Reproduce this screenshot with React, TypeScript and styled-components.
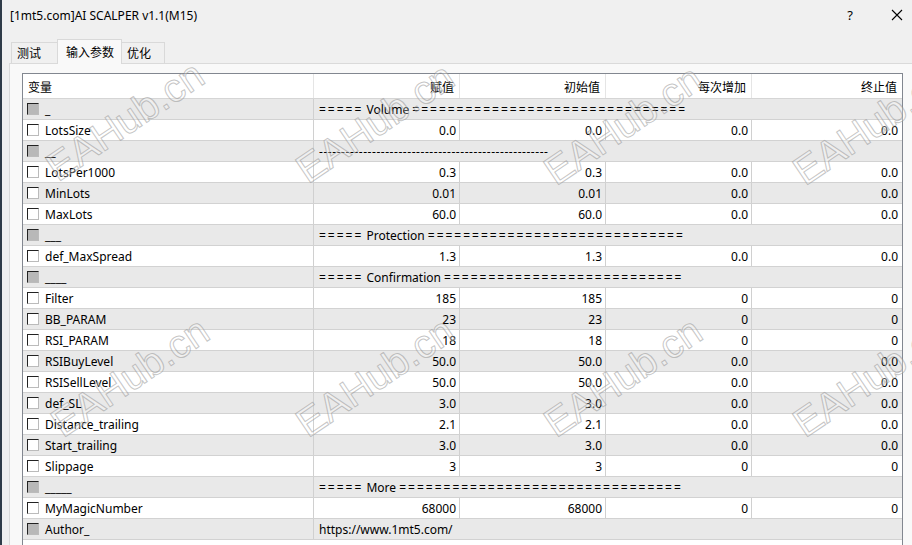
import React from 'react';
import styled, { createGlobalStyle } from 'styled-components';

const GlobalStyle = createGlobalStyle`
  html, body {
    margin: 0;
    padding: 0;
    background: #f0f0f0;
  }
  body {
    font-family: "Noto Sans", "Noto Sans CJK SC", sans-serif;
    font-size: 12px;
    color: #000;
  }
`;

const Window = styled.div`
  position: relative;
  width: 912px;
  height: 545px;
  overflow: hidden;
  display: flex;
  flex-direction: column;
  background: #f0f0f0;
  box-sizing: border-box;
  border-left: 2px solid #2f3b48;
`;

const TitleBar = styled.div`
  height: 30px;
  flex: 0 0 30px;
  display: flex;
  align-items: center;
  padding-left: 8px;
  font-size: 12px;
  background: #f0f0f0;
`;

const Title = styled.span`
  flex: 1;
  white-space: nowrap;
`;

const TitleButton = styled.div<{ $gap?: number }>`
  width: 30px;
  height: 30px;
  margin-right: ${({ $gap }) => $gap ?? 0}px;
  display: flex;
  align-items: center;
  justify-content: center;
  font-size: 13px;
`;

const TabStrip = styled.div`
  height: 33px;
  flex: 0 0 33px;
  display: flex;
  align-items: flex-end;
  padding-left: 9px;
  font-family: "Noto Sans CJK SC", sans-serif;
`;

const Tab = styled.div<{ $active?: boolean; $w: number }>`
  box-sizing: border-box;
  width: ${({ $w }) => $w}px;
  height: ${({ $active }) => ($active ? '25px' : '21px')};
  padding-left: ${({ $active }) => ($active ? '8px' : '5px')};
  display: flex;
  align-items: center;
  border: 1px solid #d9d9d9;
  border-bottom: none;
  background: ${({ $active }) => ($active ? '#f9f9f9' : '#f0f0f0')};
  margin-bottom: ${({ $active }) => ($active ? '-1px' : '0')};
  z-index: ${({ $active }) => ($active ? 1 : 0)};
  margin-left: ${({ $active }) => ($active ? '-1px' : '0')};
  margin-right: ${({ $active }) => ($active ? '-1px' : '0')};
  font-size: 12px;
  line-height: 1;
`;

const Panel = styled.div`
  flex: 1;
  margin-left: 7px;
  padding: 9px 0 0 12px;
  background: #f9f9f9;
  border-top: 1px solid #dadada;
  border-left: 1px solid #dadada;
`;

const Table = styled.div`
  width: 881px;
  box-sizing: border-box;
  border: 1px solid #828790;
  border-bottom: none;
  background: #fff;
  height: 480px;
`;

const GridRow = styled.div<{ $shade?: boolean; $header?: boolean }>`
  display: grid;
  grid-template-columns: 291px 146px 146px 146px 150px;
  height: ${({ $header }) => ($header ? '24px' : '20px')};
  border-bottom: 1px solid ${({ $header }) => ($header ? '#d5d5d5' : '#d2d2d2')};
  background: ${({ $shade }) => ($shade ? '#e9e9e9' : '#fff')};
`;

const HeadCell = styled.div<{ $right?: boolean; $last?: boolean }>`
  display: flex;
  align-items: center;
  justify-content: ${({ $right }) => ($right ? 'flex-end' : 'flex-start')};
  padding: ${({ $right }) => ($right ? '0 5px 0 0' : '0 0 0 5px')};
  border-right: ${({ $last }) => ($last ? 'none' : '1px solid #e5e5e5')};
  font-family: "Noto Sans CJK SC", sans-serif;
  font-size: 12px;
  white-space: nowrap;
`;

const NameCell = styled.div`
  display: flex;
  align-items: center;
  padding-left: 4px;
  border-right: 1px solid #d0d0d0;
  white-space: nowrap;
`;

const ValueCell = styled.div<{ $last?: boolean }>`
  display: flex;
  align-items: center;
  justify-content: flex-end;
  padding-right: ${({ $last }) => ($last ? '4px' : '3px')};
  border-right: ${({ $last }) => ($last ? 'none' : '1px solid #d0d0d0')};
  white-space: nowrap;
`;

const SpanCell = styled.div`
  grid-column: span 4;
  display: flex;
  align-items: center;
  padding-left: 5px;
  white-space: pre;
  overflow: hidden;
`;

const Rule = styled.span<{ $spacing: number }>`
  letter-spacing: ${({ $spacing }) => $spacing}px;
`;

const Check = styled.span<{ $grey?: boolean }>`
  box-sizing: border-box;
  width: 12px;
  height: 12px;
  margin-right: 6px;
  flex: 0 0 12px;
  border-top: 1px solid #222;
  border-left: 1px solid #222;
  border-right: 1px solid #bbb;
  border-bottom: 1px solid #bbb;
  background: ${({ $grey }) => ($grey ? '#b8b8b8' : '#fff')};
`;

const Watermark = styled.div`
  position: absolute;
  font-family: "Liberation Sans", Arial, sans-serif;
  font-size: 40px;
  color: rgba(255, 255, 255, 0.3);
  -webkit-text-stroke: 1px rgba(140, 140, 140, 0.5);
  white-space: nowrap;
  transform: translate(-50%, -50%) rotate(-34deg);
  pointer-events: none;
  z-index: 5;
`;

type Row = {
  name: string;
  values?: string[];
  text?: string;
};

const eq = (n: number) => '='.repeat(n);

const rows: Row[] = [
  { name: '_', text: `===== Volume ${eq(31)}` },
  { name: 'LotsSize', values: ['0.0', '0.0', '0.0', '0.0'] },
  { name: '__', text: '-'.repeat(52) },
  { name: 'LotsPer1000', values: ['0.3', '0.3', '0.0', '0.0'] },
  { name: 'MinLots', values: ['0.01', '0.01', '0.0', '0.0'] },
  { name: 'MaxLots', values: ['60.0', '60.0', '0.0', '0.0'] },
  { name: '___', text: `===== Protection ${eq(29)}` },
  { name: 'def_MaxSpread', values: ['1.3', '1.3', '0.0', '0.0'] },
  { name: '____', text: `===== Confirmation ${eq(27)}` },
  { name: 'Filter', values: ['185', '185', '0', '0'] },
  { name: 'BB_PARAM', values: ['23', '23', '0', '0'] },
  { name: 'RSI_PARAM', values: ['18', '18', '0', '0'] },
  { name: 'RSIBuyLevel', values: ['50.0', '50.0', '0.0', '0.0'] },
  { name: 'RSISellLevel', values: ['50.0', '50.0', '0.0', '0.0'] },
  { name: 'def_SL', values: ['3.0', '3.0', '0.0', '0.0'] },
  { name: 'Distance_trailing', values: ['2.1', '2.1', '0.0', '0.0'] },
  { name: 'Start_trailing', values: ['3.0', '3.0', '0.0', '0.0'] },
  { name: 'Slippage', values: ['3', '3', '0', '0'] },
  { name: '_____', text: `===== More ${eq(32)}` },
  { name: 'MyMagicNumber', values: ['68000', '68000', '0', '0'] },
  { name: 'Author_', text: 'https://www.1mt5.com/' },
];

// '=' and '-' runs are spaced out to the width the original font gives them
const renderText = (text: string) =>
  text.split(/(=+|-+)/).map((part, i) => {
    if (/^=+$/.test(part)) return <Rule key={i} $spacing={2}>{part}</Rule>;
    if (/^-+$/.test(part)) return <Rule key={i} $spacing={0.55}>{part}</Rule>;
    return <React.Fragment key={i}>{part}</React.Fragment>;
  });

const marks = [
  [123, 121], [373, 123], [621, 125], [870, 125],
  [128, 377], [373, 377], [621, 377], [870, 377],
];

const CloseIcon = () => (
  <svg width="12" height="12" viewBox="0 0 12 12">
    <path d="M1 1 L11 11 M11 1 L1 11" stroke="#000" strokeWidth="1.1" fill="none" />
  </svg>
);

const App: React.FC = () => (
  <>
    <GlobalStyle />
    <Window>
      <TitleBar>
        <Title>[1mt5.com]AI SCALPER v1.1(M15)</Title>
        <TitleButton $gap={17}>?</TitleButton>
        <TitleButton>
          <CloseIcon />
        </TitleButton>
      </TitleBar>
      <TabStrip>
        <Tab $w={47}>测试</Tab>
        <Tab $w={65} $active>输入参数</Tab>
        <Tab $w={44}>优化</Tab>
      </TabStrip>
      <Panel>
        <Table>
          <GridRow $header>
            <HeadCell>变量</HeadCell>
            <HeadCell $right>赋值</HeadCell>
            <HeadCell $right>初始值</HeadCell>
            <HeadCell $right>每次增加</HeadCell>
            <HeadCell $right $last>终止值</HeadCell>
          </GridRow>
          {rows.map((r, i) => (
            <GridRow key={r.name} $shade={i % 2 === 0}>
              <NameCell>
                <Check $grey={!!r.text} />
                {r.name}
              </NameCell>
              {r.text ? (
                <SpanCell>{renderText(r.text)}</SpanCell>
              ) : (
                r.values!.map((v, j) => (
                  <ValueCell key={j} $last={j === 3}>
                    {v}
                  </ValueCell>
                ))
              )}
            </GridRow>
          ))}
        </Table>
      </Panel>
      {marks.map(([x, y], i) => (
        <Watermark key={i} style={{ left: x, top: y }}>
          EAHub.cn
        </Watermark>
      ))}
    </Window>
  </>
);

export default App;
